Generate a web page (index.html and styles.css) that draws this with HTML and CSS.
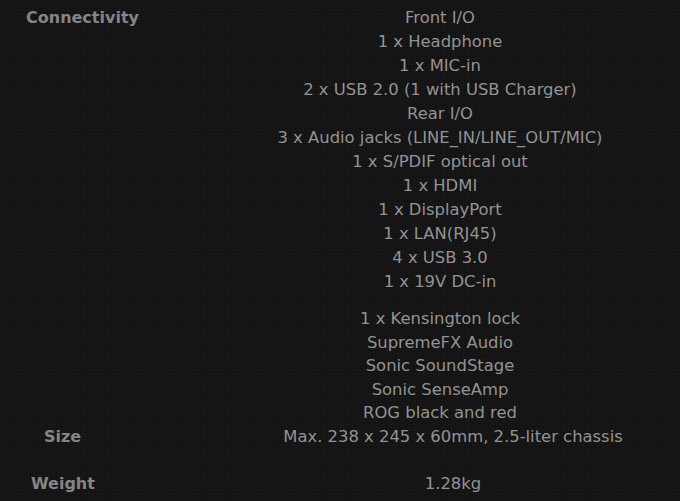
FILE: index.html
```html
<!DOCTYPE html>
<html>
<head>
<meta charset="utf-8">
<link rel="stylesheet" href="styles.css">
</head>
<body>
<div class="specs">
  <div class="row">
    <div class="label label-conn">Connectivity</div>
    <div class="value">
      <div class="line">Front I/O</div>
      <div class="line">1 x Headphone</div>
      <div class="line">1 x MIC-in</div>
      <div class="line">2 x USB 2.0 (1 with USB Charger)</div>
      <div class="line">Rear I/O</div>
      <div class="line">3 x Audio jacks (LINE_IN/LINE_OUT/MIC)</div>
      <div class="line">1 x S/PDIF optical out</div>
      <div class="line">1 x HDMI</div>
      <div class="line">1 x DisplayPort</div>
      <div class="line">1 x LAN(RJ45)</div>
      <div class="line">4 x USB 3.0</div>
      <div class="line">1 x 19V DC-in</div>
      <div class="line line-tight gap-before">1 x Kensington lock</div>
      <div class="line line-tight">SupremeFX Audio</div>
      <div class="line line-tight">Sonic SoundStage</div>
      <div class="line line-tight">Sonic SenseAmp</div>
      <div class="line line-tight">ROG black and red</div>
    </div>
  </div>
  <div class="row">
    <div class="label label-size">Size</div>
    <div class="value value-shift">
      <div class="line">Max. 238 x 245 x 60mm, 2.5-liter chassis</div>
    </div>
  </div>
  <div class="row row-weight">
    <div class="label label-weight">Weight</div>
    <div class="value value-shift">
      <div class="line">1.28kg</div>
    </div>
  </div>
</div>
</body>
</html>
```
FILE: styles.css
```css
html, body {
  margin: 0;
  padding: 0;
  background: #141414;
}
body {
  width: 680px;
  height: 501px;
  overflow: hidden;
  font-family: "DejaVu Sans", Verdana, sans-serif;
  background-color: #141414;
  background-image:
    radial-gradient(rgba(255,255,255,0.035) 0.6px, transparent 0.8px),
    radial-gradient(rgba(255,255,255,0.025) 0.6px, transparent 0.8px);
  background-size: 3px 3px, 5px 5px;
  background-position: 0 0, 1px 2px;
}
.specs {
  padding-top: 6px;
}
.row {
  display: grid;
  grid-template-columns: 200px 480px;
}
.row-weight {
  margin-top: 23px;
}
.label {
  font-weight: bold;
  font-size: 16px;
  color: #858585;
  line-height: 24px;
}
.label-conn { padding-left: 26px; }
.label-size { padding-left: 44px; }
.label-weight { padding-left: 31px; }
.value {
  text-align: center;
  color: #939393;
  font-size: 16.4px;
}
.value-shift {
  padding-left: 26px;
}
.line {
  line-height: 24px;
  white-space: nowrap;
}
.line-tight {
  line-height: 23.5px;
}
.gap-before {
  margin-top: 13px;
}
```
